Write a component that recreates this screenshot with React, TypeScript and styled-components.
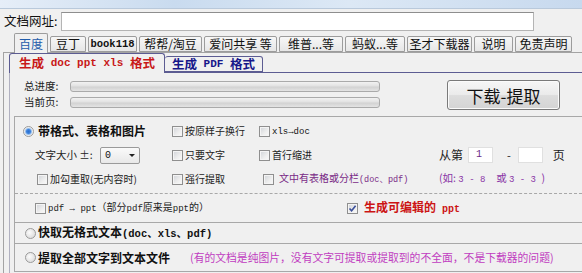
import React from 'react';
import styled, { createGlobalStyle } from 'styled-components';

const GlobalStyle = createGlobalStyle`
  html, body {
    margin: 0;
    padding: 0;
    background: #f0f0f0;
  }
  body {
    width: 582px;
    height: 273px;
    overflow: hidden;
    font-family: "Noto Sans CJK SC", "Noto Sans", sans-serif;
    font-size: 12px;
    color: #111;
  }
`;

const CJK = '"Noto Sans CJK SC", "Noto Sans", sans-serif';
const MONO = '"Liberation Mono", "Noto Sans CJK SC", monospace';

const Window = styled.div`
  width: 582px;
  height: 273px;
  display: flex;
  flex-direction: column;
  background: #f0f0f0;
  overflow: hidden;
`;

const TitleStrip = styled.div`
  height: 8px;
  flex-shrink: 0;
  background: linear-gradient(to right, #e6eef8 0%, #c9dbef 30%, #dce8f5 60%, #c7d9ee 100%);
  border-bottom: 1px solid #b9c9db;
`;

const UrlRow = styled.div`
  height: 24px;
  display: flex;
  align-items: center;
  gap: 4px;
  padding-left: 4px;
  flex-shrink: 0;
`;

const UrlLabel = styled.span`
  font-size: 12.5px;
  line-height: 1;
  color: #111;
`;

const UrlInput = styled.div`
  width: 473px;
  height: 19px;
  box-sizing: border-box;
  background: #fff;
  border: 1px solid #b4b4b4;
  border-top-color: #8e8e8e;
`;

const TabStrip = styled.div`
  height: 19px;
  display: flex;
  align-items: flex-end;
  gap: 2px;
  padding-left: 14px;
  flex-shrink: 0;
  position: relative;
  z-index: 1;
`;

const TopTab = styled.div<{ $w: number; $active?: boolean; $mono?: boolean }>`
  width: ${(p) => p.$w}px;
  height: ${(p) => (p.$active ? 20 : 16)}px;
  margin-bottom: ${(p) => (p.$active ? -1 : 0)}px;
  box-sizing: border-box;
  display: flex;
  align-items: center;
  justify-content: center;
  border: 1px solid #9c9c9c;
  border-bottom: ${(p) => (p.$active ? 'none' : '1px solid #9c9c9c')};
  border-radius: 2px 2px 0 0;
  background: ${(p) => (p.$active ? '#f0f0f0' : 'linear-gradient(#f7f7f7, #e6e6e6)')};
  color: ${(p) => (p.$active ? '#1f5cab' : '#111')};
  font-family: ${(p) => (p.$mono ? MONO : CJK)};
  font-weight: ${(p) => (p.$mono ? 700 : 400)};
  font-size: ${(p) => (p.$mono ? 10.5 : 12)}px;
  white-space: nowrap;
  line-height: 1;
`;

const OuterPanel = styled.div`
  flex: 1;
  margin-left: 3px;
  border-left: 1px solid #a3a3a3;
  border-top: 1px solid #a3a3a3;
  padding-left: 5px;
  display: flex;
  flex-direction: column;
  min-height: 0;
`;

const InnerTabStrip = styled.div`
  height: 19px;
  display: flex;
  align-items: flex-end;
  flex-shrink: 0;
  position: relative;
  z-index: 1;
`;

const InnerTab = styled.div<{ $w: number; $active?: boolean }>`
  width: ${(p) => p.$w}px;
  height: ${(p) => (p.$active ? 20 : 16)}px;
  margin-bottom: ${(p) => (p.$active ? -1 : 0)}px;
  box-sizing: border-box;
  display: flex;
  align-items: center;
  justify-content: center;
  border: 1px solid #5c5c92;
  border-bottom: ${(p) => (p.$active ? 'none' : '1px solid #5c5c92')};
  border-left: ${(p) => (p.$active ? '1px solid #5c5c92' : 'none')};
  border-radius: 3px 3px 0 0;
  background: #f0f0f0;
  color: ${(p) => (p.$active ? '#c81818' : '#17178a')};
  font-weight: 700;
  font-size: 12.5px;
  white-space: nowrap;
  line-height: 1;
`;

const MonoBit = styled.span<{ $size?: number; $thin?: boolean }>`
  font-family: ${MONO};
  font-weight: ${(p) => (p.$thin ? 400 : 700)};
  font-size: ${(p) => p.$size ?? 11}px;
  white-space: pre;
`;

const InnerPanel = styled.div`
  flex: 1;
  border-top: 1px solid #5c5c92;
  border-left: 1px solid #b0b0c0;
  display: flex;
  flex-direction: column;
  min-height: 0;
`;

const ProgressArea = styled.div`
  height: 43px;
  display: flex;
  align-items: flex-start;
  padding-top: 7px;
  box-sizing: border-box;
  flex-shrink: 0;
`;

const ProgressRows = styled.div`
  display: flex;
  flex-direction: column;
  gap: 4px;
  padding-left: 14px;
`;

const ProgressRow = styled.div`
  display: flex;
  align-items: center;
  height: 12px;
`;

const SmallLabel = styled.span`
  width: 46px;
  font-size: 10.5px;
  line-height: 1;
  color: #222;
`;

const Bar = styled.div`
  width: 310px;
  height: 11px;
  box-sizing: border-box;
  border: 1px solid #aaaaaa;
  border-radius: 3px;
  background: linear-gradient(#f2f2f2 0%, #e2e2e2 45%, #d2d2d2 55%, #e4e4e4 100%);
`;

const BigButton = styled.div`
  margin-left: 67px;
  width: 113px;
  height: 30px;
  box-sizing: border-box;
  border: 1px solid #7a7a7a;
  border-radius: 3px;
  background: linear-gradient(#f6f6f6 0%, #ebebeb 48%, #dddddd 52%, #d4d4d4 100%);
  display: flex;
  align-items: center;
  justify-content: center;
  font-size: 17px;
  color: #111;
  line-height: 1;
  box-shadow: inset 0 0 0 1px #fbfbfb;
`;

const Group = styled.div`
  margin-left: 4px;
  border-left: 1px solid #a8a8a8;
  border-top: 1px solid #a8a8a8;
  display: flex;
  flex-direction: column;
`;

const OptionGrid = styled.div`
  display: grid;
  grid-template-columns: 157px 87px 180px 1fr;
  grid-template-rows: 22px 26px 22px;
  padding: 3px 0;
  border-bottom: 1px dashed #a8a8a8;
`;

const Cell = styled.div<{ $pad?: number }>`
  display: flex;
  align-items: center;
  padding-left: ${(p) => p.$pad ?? 0}px;
  white-space: nowrap;
  min-width: 0;
`;

const Opt = styled.label`
  display: flex;
  align-items: center;
  gap: 2px;
  white-space: nowrap;
`;

const Box = styled.span`
  display: inline-flex;
  align-items: center;
  justify-content: center;
  width: 11px;
  height: 11px;
  flex-shrink: 0;
  box-sizing: border-box;
  border: 1px solid #8f8f8f;
  background: linear-gradient(135deg, #d0d3d8 0%, #eeeeee 60%, #fafafa 100%);
  box-shadow: inset 0 0 0 1px #f4f4f4;
`;

const RadioDot = styled.span<{ $checked?: boolean }>`
  width: 11px;
  height: 11px;
  flex-shrink: 0;
  box-sizing: border-box;
  border-radius: 50%;
  border: 1px solid #9a9a9a;
  background: ${(p) =>
    p.$checked
      ? 'radial-gradient(circle, #2a6fd0 0, #3d82dc 2px, #a6c8ef 3.2px, #f3f3f3 4.2px)'
      : 'radial-gradient(circle at 40% 40%, #fbfbfb, #d4d4d4)'};
`;

const OptText = styled.span<{ $size?: number; $color?: string; $bold?: boolean }>`
  font-size: ${(p) => p.$size ?? 10}px;
  color: ${(p) => p.$color ?? '#222'};
  font-weight: ${(p) => (p.$bold ? 700 : 400)};
  line-height: 1;
`;

const SizeLabel = styled.span`
  font-size: 10.5px;
  color: #222;
  width: 65px;
  line-height: 1;
`;

const Select = styled.div`
  width: 40px;
  height: 17px;
  box-sizing: border-box;
  border: 1px solid #9a9a9a;
  border-radius: 2px;
  background: linear-gradient(#fafafa, #e8e8e8);
  display: flex;
  align-items: center;
  justify-content: space-between;
  padding: 0 4px 0 4px;
  font-size: 10px;
  font-family: ${MONO};
`;

const Caret = styled.span`
  width: 0;
  height: 0;
  border-left: 3px solid transparent;
  border-right: 3px solid transparent;
  border-top: 3px solid #222;
`;

const PageRange = styled.div`
  display: flex;
  align-items: center;
  font-size: 12px;
  color: #222;
  line-height: 1;
`;

const PageInput = styled.div<{ $ml: number }>`
  margin-left: ${(p) => p.$ml}px;
  width: 25px;
  height: 16px;
  box-sizing: border-box;
  background: #fff;
  border: 1px solid #e0e0e0;
  display: flex;
  align-items: center;
  padding-left: 7px;
  font-family: ${MONO};
  font-size: 10px;
  color: #6a2a8a;
`;

const Dash = styled.span`
  margin-left: 14px;
  font-size: 11px;
`;

const PageWord = styled.span`
  margin-left: 10px;
`;

const Note = styled.span<{ $color: string; $size?: number }>`
  font-size: ${(p) => p.$size ?? 10.5}px;
  color: ${(p) => p.$color};
  line-height: 1;
  white-space: pre;
`;

const PdfRow = styled.div`
  height: 28px;
  display: grid;
  grid-template-columns: 332px 1fr;
  align-items: center;
  border-bottom: 1px solid #a8a8a8;
`;

const ModeRow = styled.div<{ $h: number }>`
  height: ${(p) => p.$h}px;
  display: flex;
  align-items: center;
  padding-left: 10px;
  border-bottom: 1px solid #a8a8a8;
  white-space: nowrap;
`;

const ModeText = styled.span`
  font-size: 12px;
  font-weight: 700;
  color: #111;
  line-height: 1;
  margin-left: 2px;
`;

const Check = ({ checked }: { checked?: boolean }) => (
  <Box>
    {checked && (
      <svg width="9" height="9" viewBox="0 0 9 9">
        <path d="M1.5 4.5 L3.6 6.8 L7.6 1.8" fill="none" stroke="#3b4f9a" strokeWidth="1.6" />
      </svg>
    )}
  </Box>
);

const topTabs: { label: string; w: number; active?: boolean; mono?: boolean }[] = [
  { label: '百度', w: 34, active: true },
  { label: '豆丁', w: 36 },
  { label: 'book118', w: 49, mono: true },
  { label: '帮帮/淘豆', w: 63 },
  { label: '爱问共享 等', w: 73 },
  { label: '维普...等', w: 64 },
  { label: '蚂蚁...等', w: 60 },
  { label: '圣才下载器', w: 65 },
  { label: '说明', w: 39 },
  { label: '免责声明', w: 57 },
];

export default function App() {
  return (
    <Window>
      <GlobalStyle />
      <TitleStrip />
      <UrlRow>
        <UrlLabel>文档网址:</UrlLabel>
        <UrlInput />
      </UrlRow>
      <TabStrip>
        {topTabs.map((t) => (
          <TopTab key={t.label} $w={t.w} $active={t.active} $mono={t.mono}>
            {t.label}
          </TopTab>
        ))}
      </TabStrip>
      <OuterPanel>
        <InnerTabStrip>
          <InnerTab $w={156} $active>
            生成<MonoBit> doc ppt xls </MonoBit>格式
          </InnerTab>
          <InnerTab $w={98}>
            生成<MonoBit> PDF </MonoBit>格式
          </InnerTab>
        </InnerTabStrip>
        <InnerPanel>
          <ProgressArea>
            <ProgressRows>
              <ProgressRow>
                <SmallLabel>总进度:</SmallLabel>
                <Bar />
              </ProgressRow>
              <ProgressRow>
                <SmallLabel>当前页:</SmallLabel>
                <Bar />
              </ProgressRow>
            </ProgressRows>
            <BigButton>下载-提取</BigButton>
          </ProgressArea>

          <Group>
            <OptionGrid>
              <Cell $pad={8}>
                <Opt>
                  <RadioDot $checked />
                  <ModeText>带格式、表格和图片</ModeText>
                </Opt>
              </Cell>
              <Cell>
                <Opt>
                  <Check />
                  <OptText>按原样子换行</OptText>
                </Opt>
              </Cell>
              <Cell>
                <Opt>
                  <Check />
                  <OptText $color="#111">
                    <MonoBit $size={9} $thin>xls→doc</MonoBit>
                  </OptText>
                </Opt>
              </Cell>
              <Cell />

              <Cell $pad={20}>
                <SizeLabel>文字大小 ±:</SizeLabel>
                <Select>
                  <span>0</span>
                  <Caret />
                </Select>
              </Cell>
              <Cell>
                <Opt>
                  <Check />
                  <OptText>只要文字</OptText>
                </Opt>
              </Cell>
              <Cell>
                <Opt>
                  <Check />
                  <OptText>首行缩进</OptText>
                </Opt>
              </Cell>
              <Cell>
                <PageRange>
                  从第
                  <PageInput $ml={5}>1</PageInput>
                  <Dash>-</Dash>
                  <PageInput $ml={7} />
                  <PageWord>页</PageWord>
                </PageRange>
              </Cell>

              <Cell $pad={22}>
                <Opt>
                  <Check />
                  <OptText>加勾重取(无内容时)</OptText>
                </Opt>
              </Cell>
              <Cell>
                <Opt>
                  <Check />
                  <OptText>强行提取</OptText>
                </Opt>
              </Cell>
              <Cell $pad={4}>
                <Opt>
                  <Check />
                  <Note $color="#7a2a86" $size={10} style={{ marginLeft: 3 }}>
                    文中有表格或分栏
                    <MonoBit $size={8.5} $thin>(doc、pdf)</MonoBit>
                  </Note>
                </Opt>
              </Cell>
              <Cell>
                <Note $color="#8a35a6" $size={10.5}>
                  {'(如: '}
                  <MonoBit $size={9} $thin>{'3 - 8  '}</MonoBit>
                  {'或 '}
                  <MonoBit $size={9} $thin>{'3 - 3 '}</MonoBit>
                  {')'}
                </Note>
              </Cell>
            </OptionGrid>

            <PdfRow>
              <Cell $pad={20}>
                <Opt>
                  <Check />
                  <OptText>
                    <MonoBit $size={9} $thin>pdf → ppt</MonoBit>（部分
                    <MonoBit $size={9} $thin>pdf</MonoBit>原来是
                    <MonoBit $size={9} $thin>ppt</MonoBit>的）
                  </OptText>
                </Opt>
              </Cell>
              <Cell>
                <Opt>
                  <Check checked />
                  <OptText $size={12} $color="#cc1414" $bold style={{ marginLeft: 4 }}>
                    生成可编辑的<MonoBit $size={10}> ppt</MonoBit>
                  </OptText>
                </Opt>
              </Cell>
            </PdfRow>

            <ModeRow $h={20}>
              <RadioDot />
              <ModeText>
                快取无格式文本<MonoBit $size={10.5}>(doc、xls、pdf)</MonoBit>
              </ModeText>
            </ModeRow>

            <ModeRow $h={27}>
              <RadioDot />
              <ModeText>提取全部文字到文本文件</ModeText>
              <Note $color="#c03cc0" $size={10.8} style={{ marginLeft: 20 }}>
                (有的文档是纯图片，没有文字可提取或提取到的不全面，不是下载器的问题)
              </Note>
            </ModeRow>
          </Group>
        </InnerPanel>
      </OuterPanel>
    </Window>
  );
}
